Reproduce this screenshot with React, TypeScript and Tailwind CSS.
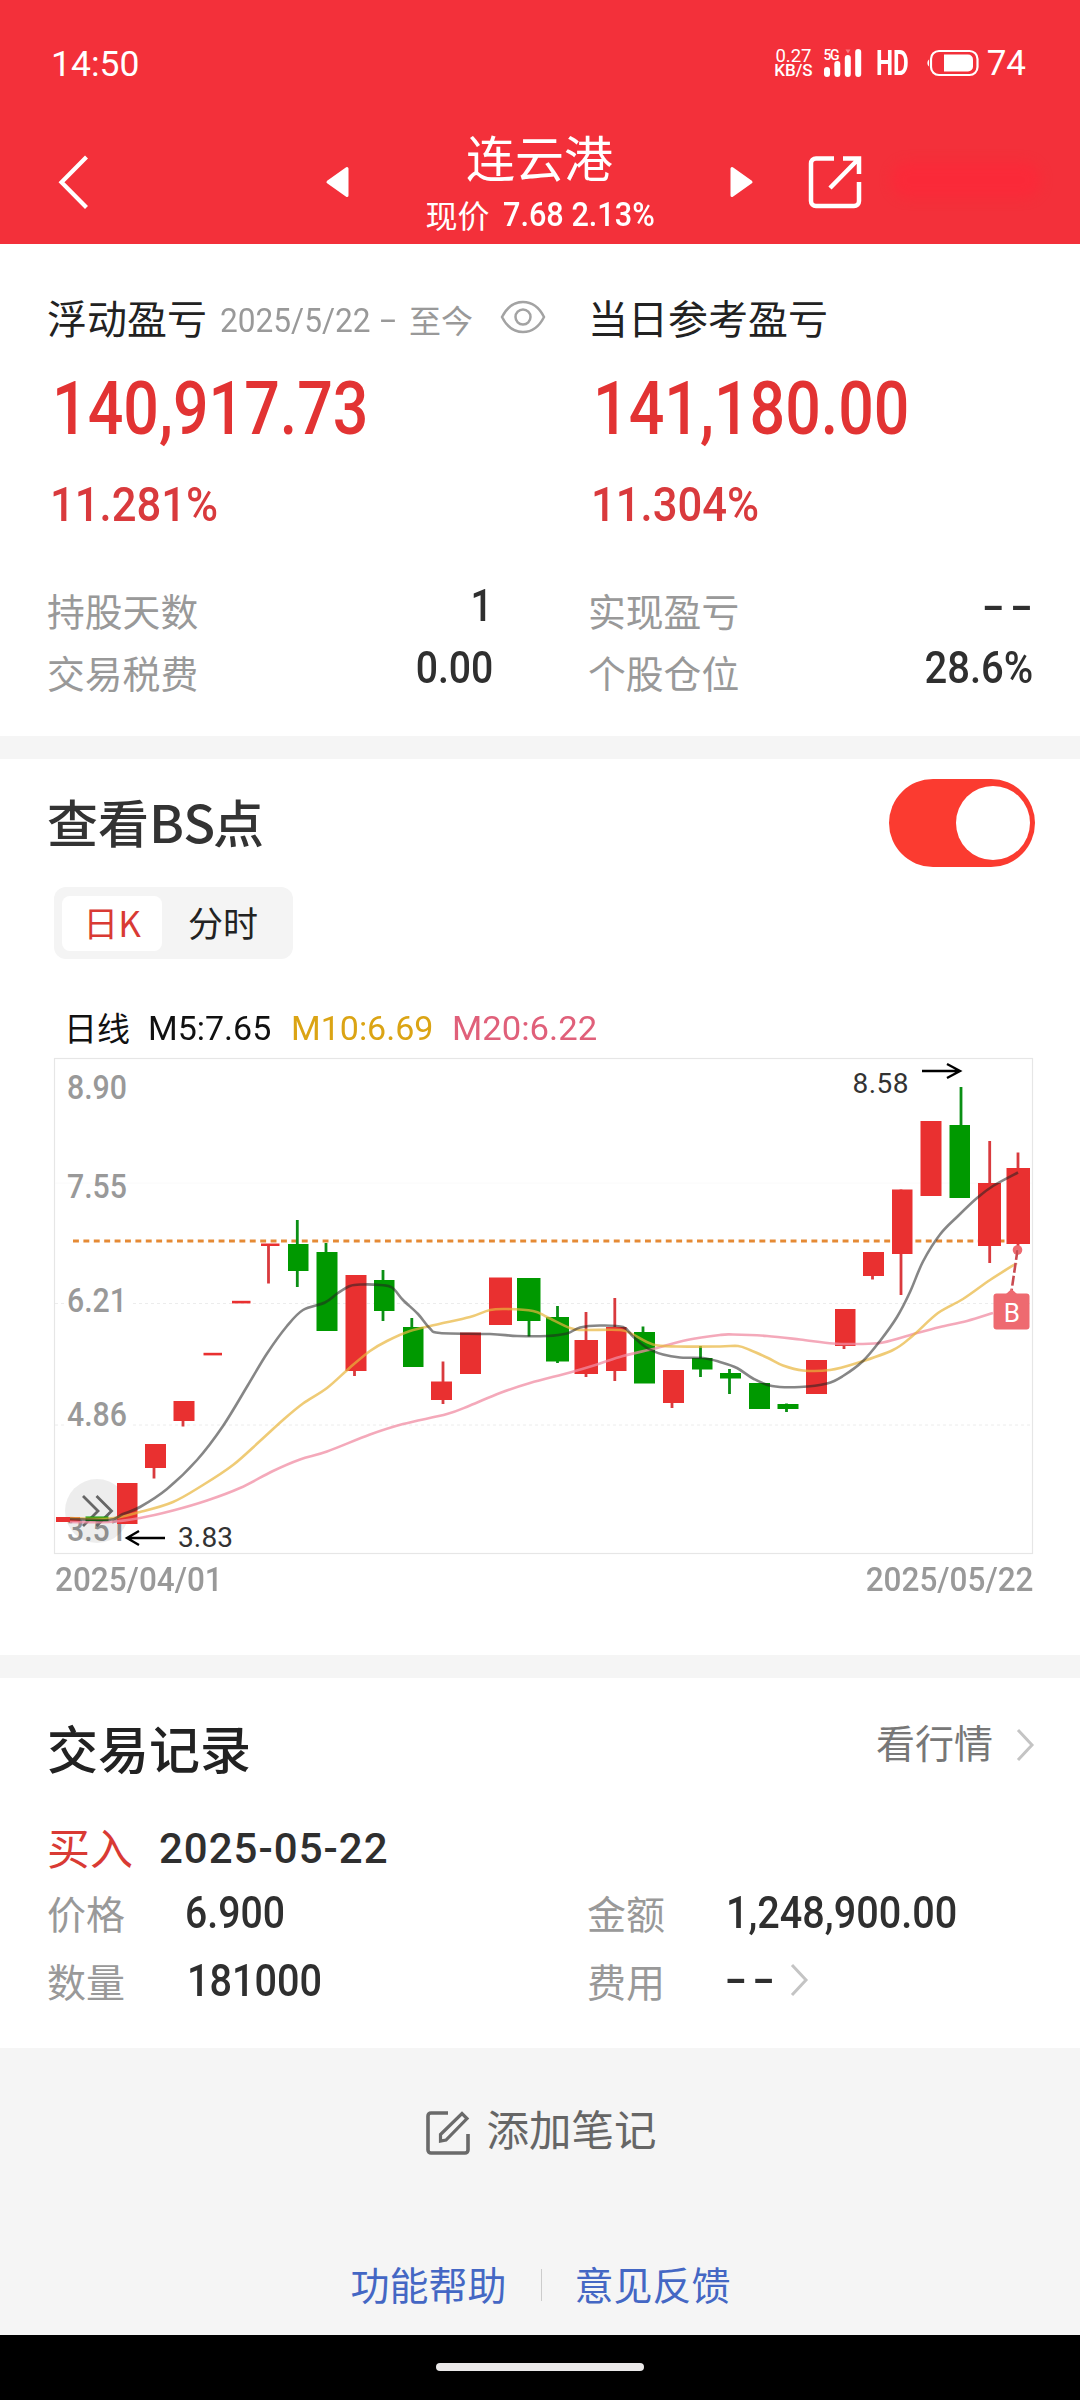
import clsx from "clsx";

type Point = [number, number];

interface Candle {
  x: number;
  w: number;
  top: number;
  bottom: number;
  up: boolean;
  wick?: [number, number, number];
}

const RED = "#e93030";
const GREEN = "#009900";

// x, width, body top, body bottom, rising, [wick x, high, low]
const candles: Candle[] = [
  { x: 56, w: 24, top: 1517, bottom: 1522, up: true },
  { x: 85.5, w: 23, top: 1516.5, bottom: 1521, up: false },
  { x: 117, w: 20.5, top: 1483, bottom: 1524, up: true },
  { x: 145, w: 21, top: 1444, bottom: 1468, up: true, wick: [154, 1444, 1478.5] },
  { x: 173.5, w: 21, top: 1401, bottom: 1421, up: true, wick: [183, 1401, 1426.5] },
  { x: 203.5, w: 18.5, top: 1352.8, bottom: 1355.4, up: true },
  { x: 232, w: 18.5, top: 1300.8, bottom: 1303.4, up: true },
  { x: 261, w: 18.5, top: 1243.5, bottom: 1246, up: true, wick: [268.5, 1244, 1283.5] },
  { x: 288, w: 20.5, top: 1244, bottom: 1271, up: false, wick: [297.3, 1220, 1287] },
  { x: 316.5, w: 21, top: 1252, bottom: 1331, up: false, wick: [326, 1243, 1331] },
  { x: 345.5, w: 21, top: 1275, bottom: 1371, up: true, wick: [354.5, 1275, 1376] },
  { x: 374, w: 20.5, top: 1280, bottom: 1311, up: false, wick: [383, 1270, 1321] },
  { x: 403, w: 20.5, top: 1327, bottom: 1367, up: false, wick: [411.8, 1318, 1367] },
  { x: 431, w: 21, top: 1381.5, bottom: 1400, up: true, wick: [443, 1361.5, 1404] },
  { x: 460, w: 21, top: 1332.5, bottom: 1374, up: true },
  { x: 489, w: 23, top: 1277.5, bottom: 1325, up: true },
  { x: 517, w: 23.5, top: 1278, bottom: 1321, up: false, wick: [529, 1278, 1336.5] },
  { x: 546, w: 23, top: 1317, bottom: 1361.5, up: false, wick: [557.5, 1306, 1363] },
  { x: 574.5, w: 23.5, top: 1340, bottom: 1374, up: true, wick: [586, 1312, 1377] },
  { x: 606, w: 20.5, top: 1327, bottom: 1371, up: true, wick: [614.8, 1298, 1381] },
  { x: 634, w: 21, top: 1332, bottom: 1383.5, up: false, wick: [643, 1326.5, 1383] },
  { x: 663, w: 21, top: 1370, bottom: 1403, up: true, wick: [672, 1370, 1408] },
  { x: 692, w: 20.5, top: 1358, bottom: 1369.5, up: false, wick: [700.5, 1346, 1377] },
  { x: 720, w: 21, top: 1373, bottom: 1378.5, up: false, wick: [729.5, 1369, 1394] },
  { x: 749, w: 21, top: 1383, bottom: 1409, up: false },
  { x: 777.5, w: 21, top: 1404, bottom: 1409, up: false, wick: [786.5, 1403.5, 1412] },
  { x: 806, w: 21, top: 1360, bottom: 1394, up: true },
  { x: 835, w: 20.5, top: 1309, bottom: 1346, up: true, wick: [844, 1309, 1349] },
  { x: 863, w: 21, top: 1252, bottom: 1276, up: true, wick: [872.5, 1252, 1279.5] },
  { x: 892, w: 20.5, top: 1189.5, bottom: 1254, up: true, wick: [901, 1189.5, 1295] },
  { x: 920.5, w: 21, top: 1121, bottom: 1196, up: true },
  { x: 949.5, w: 20.5, top: 1125, bottom: 1198, up: false, wick: [961, 1087, 1198] },
  { x: 978, w: 23, top: 1183, bottom: 1246, up: true, wick: [989.7, 1141, 1263] },
  { x: 1006.5, w: 23.5, top: 1168, bottom: 1244, up: true, wick: [1018, 1152.5, 1252] },
];

const ma5: Point[] = [
  [70, 1519], [109, 1520], [123, 1514], [140, 1507], [167, 1489], [197, 1460],
  [223, 1426], [248, 1385], [267, 1353.5], [287, 1326], [303, 1310], [325, 1302.5],
  [338, 1293], [350, 1286], [362, 1284.5], [380, 1285], [392, 1287.5], [403, 1300],
  [418, 1314], [430, 1328.5], [440, 1333], [490, 1334], [517, 1336], [547, 1336],
  [567, 1333.5], [580, 1327.5], [600, 1325.5], [623, 1327], [633, 1336.5],
  [647, 1348], [663, 1354.5], [680, 1357.5], [703, 1358], [720, 1362], [737, 1368],
  [753, 1378.5], [772, 1386], [800, 1387], [827, 1383.5], [843, 1376], [863, 1361],
  [880, 1341], [897, 1317], [910, 1292], [923, 1261.5], [940, 1234.5], [958, 1216],
  [977, 1198], [993, 1186], [1018, 1172.5],
];

const ma10: Point[] = [
  [70, 1518], [109, 1518.5], [140, 1512], [173, 1502], [203, 1485], [233, 1465],
  [260, 1441], [283, 1420], [303, 1403.5], [327, 1388], [350, 1367.5], [370, 1351],
  [387, 1341], [410, 1331], [437, 1324.5], [470, 1317], [490, 1310], [507, 1309],
  [533, 1311], [547, 1317], [570, 1328], [583, 1330], [620, 1330], [633, 1334.5],
  [653, 1344.5], [677, 1346.5], [720, 1346.5], [738, 1346], [750, 1350],
  [768, 1358], [783, 1365.5], [803, 1370.5], [830, 1370], [857, 1363], [893, 1350],
  [913, 1335.5], [938, 1313], [963, 1299], [990, 1280], [1017, 1263],
];

const ma20: Point[] = [
  [70, 1522], [109, 1522], [140, 1518], [173, 1510.5], [207, 1500.5], [240, 1488],
  [273, 1471], [300, 1459.5], [327, 1451.5], [370, 1434.5], [403, 1424],
  [447, 1414], [470, 1405.5], [500, 1393], [530, 1383], [570, 1372.5],
  [597, 1364.5], [623, 1356], [657, 1348], [687, 1340], [720, 1335], [733, 1334.5],
  [767, 1336], [800, 1339.5], [833, 1343.5], [857, 1344], [883, 1342.5],
  [917, 1333], [940, 1327], [967, 1321], [993, 1313],
];

const axisLabels = [
  { text: "8.90", y: 1099 },
  { text: "7.55", y: 1198 },
  { text: "6.21", y: 1311.5 },
  { text: "4.86", y: 1426 },
  { text: "3.51", y: 1541 },
];

// Catmull-Rom spline through all the points
const smooth = (pts: Point[]) => {
  let d = `M${pts[0][0]} ${pts[0][1]}`;
  for (let i = 0; i < pts.length - 1; i++) {
    const p0 = pts[i - 1] ?? pts[i];
    const p1 = pts[i];
    const p2 = pts[i + 1];
    const p3 = pts[i + 2] ?? p2;
    d += ` C${p1[0] + (p2[0] - p0[0]) / 6} ${p1[1] + (p2[1] - p0[1]) / 6} ${
      p2[0] - (p3[0] - p1[0]) / 6
    } ${p2[1] - (p3[1] - p1[1]) / 6} ${p2[0]} ${p2[1]}`;
  }
  return d;
};

const Num = ({ className, children }: { className?: string; children: string }) => (
  <span
    className={clsx(
      "inline-block whitespace-pre font-['Roboto',sans-serif]",
      className
    )}
  >
    {children}
  </span>
);

const ChevronRight = ({ className }: { className?: string }) => (
  <svg className={className} width="20" height="34" viewBox="0 0 20 34" fill="none">
    <path d="M3 2L17 17L3 32" stroke="#c4c4c4" strokeWidth="3" />
  </svg>
);

const StatusBar = () => (
  <div className="flex h-[126px] items-center justify-between pl-[51px] pr-[54px]">
    <span className="mt-[3px] text-[35.5px] leading-none font-['Roboto',sans-serif]">14:50</span>
    <div className="flex items-center font-['Roboto',sans-serif]">
      <div className="flex flex-col items-center leading-none mr-[11px]">
        <span className="text-[18.5px] h-[14px] leading-[14px]">0.27</span>
        <span className="text-[17px] h-[14px] leading-[15px] font-medium">KB/S</span>
      </div>
      <svg className="mr-[14px] overflow-visible" width="38" height="30" viewBox="825 48 38 30" fill="#fff">
        <text x="824.5" y="60" fontSize="14" fontWeight="500" textLength="16">
          5G
        </text>
        <path d="M846.500 49.500h5l-2.500 4z" opacity=".35" />
        <rect x="825" y="67" width="6" height="10" rx="3" />
        <rect x="835.300" y="61" width="6" height="16" rx="3" />
        <rect x="845.800" y="55" width="6" height="22" rx="3" />
        <rect x="856.200" y="49" width="6" height="28" rx="3" />
      </svg>
      <span className="inline-block w-[34px] mr-[15px] text-[34.5px] leading-none font-bold">
        <span className="inline-block origin-left scale-x-[.7]">HD</span>
      </span>
      <svg className="mr-[8px]" width="54" height="28" viewBox="926 49 54 28" fill="none">
        <path d="M930 59.500a4.500 4.500 0 0 0 0 7z" fill="#fff" />
        <rect x="932" y="51" width="46.500" height="24" rx="8" stroke="#fff" strokeWidth="2.200" />
        <path d="M945 54.500h24a5 5 0 0 1 5 5v7a5 5 0 0 1-5 5h-24z" fill="#fff" />
      </svg>
      <span className="text-[35px] leading-none">74</span>
    </div>
  </div>
);

const Header = () => (
  <header className="h-[244px] bg-[#f3303a] text-white overflow-hidden">
    <StatusBar />
    <div className="flex h-[118px] items-start">
      <svg className="ml-[57px] mt-[28px]" width="32" height="56" viewBox="0 0 32 56" fill="none">
        <path d="M29.500 3L4.500 28.300L29.500 53.500" stroke="#fff" strokeWidth="4.200" />
      </svg>
      <svg className="ml-[236px] mt-[40px]" width="26" height="32" viewBox="0 0 26 32">
        <path d="M22 2.500V29.500L3 16Z" fill="#fff" stroke="#fff" strokeWidth="3" strokeLinejoin="round" />
      </svg>
      <div className="flex w-[377px] flex-col items-center">
        <h1 className="text-[49px] leading-[60px]">连云港</h1>
        <p className="flex items-center text-[32px] leading-[40px] mt-[6px]">
          现价
          <Num className="ml-[13px] mt-[3px] w-[151px] text-[33.5px] font-medium origin-left scale-x-[.915]">
            7.68 2.13%
          </Num>
        </p>
      </div>
      <svg className="mt-[40px]" width="26" height="32" viewBox="0 0 26 32">
        <path d="M4 2.500V29.500L23 16Z" fill="#fff" stroke="#fff" strokeWidth="3" strokeLinejoin="round" />
      </svg>
      <svg className="ml-[53px] mt-[28px]" width="56" height="56" viewBox="0 0 56 56" fill="none" stroke="#fff" strokeWidth="4.500">
        <path d="M27 4.500H9A5 5 0 0 0 4 9.500V47A5 5 0 0 0 9 52H47A5 5 0 0 0 52 47V28" />
        <path d="M36 4.500H52V20M52 4.500L23 34" />
      </svg>
      <div className="ml-7 mt-9 h-9 w-[150px] rounded-full bg-[#ff2638] opacity-60 blur-[6px]" />
    </div>
  </header>
);

const Stat = ({
  label,
  value,
  valueClass,
}: {
  label: string;
  value: string;
  valueClass?: string;
}) => (
  <div className="flex h-[62px] items-center justify-between">
    <span className="text-[37.8px] leading-none text-[#999]">{label}</span>
    <Num
      className={clsx(
        "mb-[6px] text-[43.5px] leading-none font-medium text-[#2f2f2f] origin-right",
        valueClass ?? "scale-x-[.9]"
      )}
    >
      {value}
    </Num>
  </div>
);

const Summary = () => (
  <section className="flex h-[492px] pl-[47px] pr-[47px] pt-[49px]">
    <div className="w-[541px]">
      <div className="flex h-12 items-center">
        <h2 className="text-[40px] leading-none text-[#222]">浮动盈亏</h2>
        <div className="flex items-center mt-1 ml-[13px] text-[#999]">
          <Num className="mt-[2px] w-[160px] text-[34px] leading-none origin-left scale-x-[.93]">
            2025/5/22
          </Num>
          <Num className="w-[29px] text-[34px] leading-none origin-left scale-x-[1.7]">
            -
          </Num>
          <span className="text-[32px] leading-none">至今</span>
        </div>
        <svg className="ml-[27px]" width="46" height="36" viewBox="0 0 46 36" fill="none" stroke="#a3a3a3" strokeWidth="2.500">
          <path d="M2 18C12 -2 34 -2 44 18C34 38 12 38 2 18Z" />
          <circle cx="23" cy="18" r="7.500" />
        </svg>
      </div>
      <Num className="block ml-[5px] mt-[28px] h-20 text-[73.5px] leading-[80px] font-medium text-[#e23333] origin-left scale-x-[.853]">
        140,917.73
      </Num>
      <Num className="block ml-[3px] mt-[32px] h-12 text-[49px] leading-[48px] font-medium text-[#d93a3d] origin-left scale-x-[.89]">
        11.281%
      </Num>
      <div className="mt-[50px] w-[446px]">
        <Stat label="持股天数" value="1" />
        <Stat label="交易税费" value="0.00" />
      </div>
    </div>
    <div className="flex-1">
      <h2 className="flex h-12 items-center text-[40px] leading-none text-[#222]">
        当日参考盈亏
      </h2>
      <Num className="block ml-[5px] mt-[28px] h-20 text-[73.5px] leading-[80px] font-medium text-[#e23333] origin-left scale-x-[.853]">
        141,180.00
      </Num>
      <Num className="block ml-[3px] mt-[32px] h-12 text-[49px] leading-[48px] font-medium text-[#d93a3d] origin-left scale-x-[.89]">
        11.304%
      </Num>
      <div className="mt-[50px]">
        <Stat label="实现盈亏" value="--" valueClass="-mr-[6px] tracking-[4px] scale-x-[1.5]" />
        <Stat label="个股仓位" value="28.6%" valueClass="scale-x-[.92]" />
      </div>
    </div>
  </section>
);

const KLineChart = () => (
  <svg
    className="block"
    width="1080"
    height="507"
    viewBox="0 1051 1080 507"
    fill="none"
    fontFamily="Roboto, sans-serif"
  >
    <rect x="54.500" y="1058.500" width="978" height="495" stroke="#e6e6e6" strokeWidth="1.200" />
    <path d="M55 1183H1032" stroke="#fafafa" />
    <path d="M55 1303.500H1032M55 1425H1032" stroke="#ececec" strokeDasharray="3 3" />
    <g fill="#fff">
      <rect x="64" y="1290" width="66" height="24" />
      <rect x="64" y="1404" width="66" height="24" />
    </g>
    {axisLabels.map((l) => (
      <text key={l.text} x="67" y={l.y} fontSize="33.500" fontWeight="500" fill="#999" textLength="60" lengthAdjust="spacingAndGlyphs">
        {l.text}
      </text>
    ))}
    <circle cx="97" cy="1511" r="32" fill="#000" opacity=".07" />
    <path d="M83 1496L98 1511L83 1526M96.500 1496L111.500 1511L96.500 1526" stroke="#666" strokeWidth="2.800" />
    <path d="M73 1241H1007" stroke="#e58a35" strokeWidth="2.800" strokeDasharray="5.900 4.500" />

    {candles.map((c) => (
      <g key={c.x} fill={c.up ? RED : GREEN}>
        {c.wick && (
          <rect
            x={c.wick[0] - 1.400}
            y={c.wick[1]}
            width="2.800"
            height={c.wick[2] - c.wick[1]}
            fill={c.up ? "#d93a3e" : "#0a8f14"}
          />
        )}
        <rect x={c.x} y={c.top} width={c.w} height={c.bottom - c.top} />
      </g>
    ))}

    <g strokeWidth="2.600">
      <path d={smooth(ma20)} stroke="#f08ca3" opacity=".75" />
      <path d={smooth(ma10)} stroke="#e8b53c" opacity=".7" />
      <path d={smooth(ma5)} stroke="#222" opacity=".55" />
    </g>

    {/* high / low marks */}
    <g stroke="#000" strokeWidth="2.400">
      <path d="M922 1071H960M947 1064L960 1071L947 1078" />
      <path d="M165 1538H127M139 1531L127 1538L139 1545" />
    </g>
    <g fontSize="28" fill="#333">
      <text x="852.500" y="1093" textLength="56">8.58</text>
      <text x="178" y="1547" textLength="55">3.83</text>
    </g>

    {/* buy point */}
    <circle cx="1017.500" cy="1250" r="4.800" fill="#ee6a70" />
    <path d="M1017.500 1250L1011.500 1291" stroke="#fff" strokeWidth="2.200" />
    <path d="M1017.500 1250L1011.500 1291" stroke="#c94a50" strokeWidth="2.600" strokeDasharray="10 3" />
    <path d="M1006 1294L1011.500 1289L1017 1294Z" fill="#ee6a70" />
    <rect x="993.500" y="1293.500" width="36" height="36" rx="3" fill="#ee6a70" />
    <text x="1011.800" y="1321.500" fontSize="26" fill="#fff" textAnchor="middle">
      B
    </text>
  </svg>
);

const ChartSection = () => (
  <section className="h-[896px] pt-5">
    <div className="flex h-[88px] items-center justify-between pl-[47px] pr-[45px]">
      <h2 className="text-[51px] leading-none text-[#333] font-medium mb-1">
        查看<span className="inline-block w-[64px] origin-left scale-x-[1.03]">BS</span>点
      </h2>
      <div className="flex h-[88px] w-[146px] items-center justify-end rounded-full bg-[#fb3b30] pr-[5.500px]">
        <div className="size-[74px] rounded-full bg-white" />
      </div>
    </div>
    <div className="mt-5 ml-[54px] flex h-[72px] w-[239px] items-center rounded-xl bg-[#f4f4f4] pl-2 text-[35px]">
      <div className="flex h-[55px] w-[100px] items-center justify-center rounded-lg bg-white pb-1 leading-none text-[#d93a34]">
        日K
      </div>
      <div className="flex-1 pb-1 pr-[9px] text-center leading-none text-[#222]">分时</div>
    </div>
    <div className="mt-[44px] ml-16 flex h-12 items-center text-[33px] leading-none text-[#111]">
      <span className="w-[84px]">日线</span>
      <Num className="mt-[3px] w-[143px] origin-left scale-x-[1.03]">M5:7.65</Num>
      <Num className="mt-[3px] w-[161px] origin-left scale-x-[1.03] text-[#dba414]">M10:6.69</Num>
      <Num className="mt-[3px] origin-left scale-x-[1.05] text-[#e0607a]">M20:6.22</Num>
    </div>
    <KLineChart />
    <div className="flex h-[42px] items-center justify-between pl-[55px] pr-[47px] pt-[2px] text-[33.5px] leading-none font-medium text-[#999]">
      <Num className="origin-left scale-x-[.94]">2025/04/01</Num>
      <Num className="origin-right scale-x-[.94]">2025/05/22</Num>
    </div>
  </section>
);

const TradeRecords = () => (
  <section className="h-[370px] pl-[47px] pr-[45px] pt-[38px]">
    <div className="flex h-16 items-center justify-between">
      <h2 className="mb-[2px] text-[51px] leading-none text-[#222] font-medium">交易记录</h2>
      <div className="mb-[14px] flex items-center text-[39px] leading-none text-[#777]">
        看行情
        <ChevronRight className="ml-[22px] mt-[7px]" />
      </div>
    </div>
    <div className="mt-10 flex h-[52px] items-center">
      <span className="text-[43px] leading-none text-[#d93a34]">买入</span>
      <Num className="ml-[26px] mt-[6px] text-[42px] leading-none font-medium text-[#2f2f2f] origin-left tracking-[1px]">
        2025-05-22
      </Num>
    </div>
    <div className="mt-1.5 grid grid-cols-[540px_1fr] text-[39px] leading-none text-[#999]">
      <div className="flex h-[68px] items-center">
        <span className="w-[138px]">价格</span>
        <Num className="mt-1 text-[43.5px] font-medium text-[#2f2f2f] origin-left scale-x-[.9]">6.900</Num>
      </div>
      <div className="flex h-[68px] items-center">
        <span className="w-[139px]">金额</span>
        <Num className="mt-1 text-[43.5px] font-medium text-[#2f2f2f] origin-left scale-x-[.91]">
          1,248,900.00
        </Num>
      </div>
      <div className="flex h-[68px] items-center">
        <span className="w-[140px]">数量</span>
        <Num className="mt-1 text-[43.5px] font-medium text-[#2f2f2f] origin-left scale-x-[.91]">181000</Num>
      </div>
      <div className="flex h-[68px] items-center">
        <span className="w-[138px]">费用</span>
        <Num className="w-[64px] text-[43.5px] font-medium text-[#2f2f2f] origin-left tracking-[4px] scale-x-[1.48]">
          --
        </Num>
        <ChevronRight />
      </div>
    </div>
  </section>
);

const Footer = () => (
  <footer className="h-[287px] bg-[#f5f5f5] pt-[50px]">
    <div className="flex h-[60px] items-center justify-center gap-[15px] pl-[2px] text-[42.5px] leading-none text-[#666]">
      <svg className="mt-[9px]" width="46" height="46" viewBox="0 0 46 46" fill="none" stroke="#6a6a6a" strokeWidth="3.600">
        <path d="M23 3H6A3 3 0 0 0 3 6V40A3 3 0 0 0 6 43H40A3 3 0 0 0 43 40V24" />
        <path d="M15.500 30.500V24.500L37 3.500L42 8.500L21 30L15.500 31Z" strokeWidth="3.200" />
      </svg>
      <span>添加笔记</span>
    </div>
    <div className="mt-[105px] flex h-10 items-center justify-center pl-px text-[39px] leading-none text-[#4467c4]">
      <span>功能帮助</span>
      <div className="ml-[34px] mr-[33px] mt-1 h-8 w-px bg-[#ccc]" />
      <span>意见反馈</span>
    </div>
  </footer>
);

const App = () => {
  return (
    <div className="w-[1080px] h-[2400px] overflow-hidden bg-white font-['Noto_Sans_CJK_SC',sans-serif]">
      <Header />
      <Summary />
      <div className="h-[23px] bg-[#f5f5f5]" />
      <ChartSection />
      <div className="h-[23px] bg-[#f5f5f5]" />
      <TradeRecords />
      <Footer />
      <div className="flex h-[65px] justify-center bg-black pt-[28px]">
        <div className="h-2 w-[208px] rounded-full bg-[#ebe9e9]" />
      </div>
    </div>
  );
};

export default App;
